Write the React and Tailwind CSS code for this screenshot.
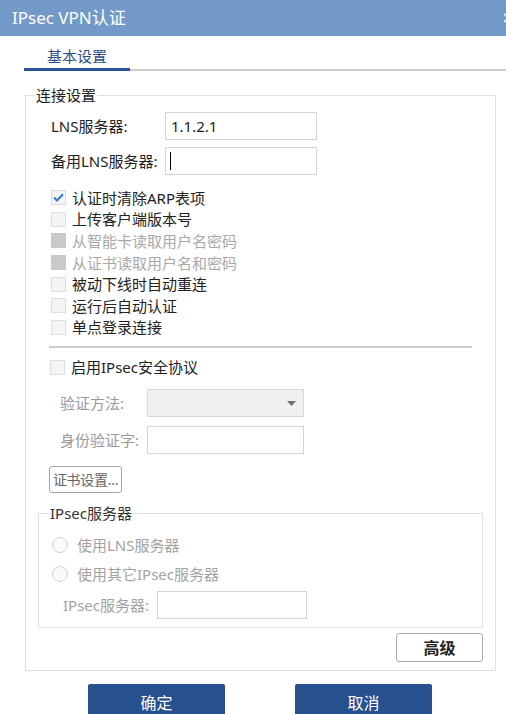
import { useState } from "react";

const CHECKS = [
  { label: "认证时清除ARP表项", checked: true },
  { label: "上传客户端版本号" },
  { label: "从智能卡读取用户名密码", disabled: true },
  { label: "从证书读取用户名和密码", disabled: true },
  { label: "被动下线时自动重连" },
  { label: "运行后自动认证" },
  { label: "单点登录连接" },
];

function Box({ checked, disabled }) {
  if (disabled) {
    return <span className="w-[15px] h-[15px] bg-[#c9c9c9] shrink-0" />;
  }
  return (
    <span className="w-[15px] h-[15px] border border-[#dedede] bg-[#f4f4f4] shrink-0 flex items-center justify-center">
      {checked && (
        <svg width="11" height="9" viewBox="0 0 11 9" fill="none">
          <path d="M1 4.5 L4 7.5 L10 1.2" stroke="#2f7fd0" strokeWidth="2" />
        </svg>
      )}
    </span>
  );
}

function CheckRow({ label, checked, disabled }) {
  return (
    <div className="h-[21.6px] flex items-center gap-[6px] pl-[25px]">
      <Box checked={checked} disabled={disabled} />
      <span className={disabled ? "text-[#a8a8a8]" : "text-[#222]"}>{label}</span>
    </div>
  );
}

function Radio({ label }) {
  return (
    <div className="h-[29px] flex items-center gap-[9px] pl-[13px]">
      <span className="w-[16px] h-[16px] rounded-full border border-[#d4d4d4] bg-[#fafafa]" />
      <span className="text-[#a3a3a3]">{label}</span>
    </div>
  );
}

export default function App() {
  const [values] = useState({ lns: "1.1.2.1" });

  return (
    <div className="w-[506px] h-[714px] bg-white overflow-hidden text-[15px] leading-[20px] font-['Noto_Sans','Noto_Sans_CJK_SC',sans-serif]">
      <div className="h-9 bg-[#7399c8] flex items-center pl-3 text-white text-[17px]">
        <span>IPsec VPN认证</span>
        <span className="ml-auto mr-[-8px] text-[20px]">×</span>
      </div>

      <div className="flex items-end">
        <div className="ml-[24px] w-[106px] text-center pt-[10px] pb-[2px] border-b-[3px] border-[#2c5597] text-[#2c4f8c]">
          基本设置
        </div>
        <div className="flex-1 border-b-2 border-[#cccccc]" />
      </div>

      <fieldset className="ml-[25px] mt-[14px] w-[471px] border border-[#e0e0e0] pb-[8px]">
        <legend className="ml-[9px] px-[1px] text-[#222]">连接设置</legend>

        <div className="pt-[7px] pl-[25px] flex flex-col gap-[7px]">
          <div className="flex items-center">
            <span className="w-[114px] text-[#222]">LNS服务器:</span>
            <div className="w-[152px] h-[28px] border border-[#d3d3e2] flex items-center px-[5px] text-[#222]">
              {values.lns}
            </div>
          </div>
          <div className="flex items-center">
            <span className="w-[114px] text-[#222]">备用LNS服务器:</span>
            <div className="w-[152px] h-[28px] border border-[#d3d3e2] flex items-center px-[4px]">
              <span className="w-px h-[18px] bg-black" />
            </div>
          </div>
        </div>

        <div className="mt-[12px]">
          {CHECKS.map((c) => (
            <CheckRow key={c.label} {...c} />
          ))}
        </div>

        <div className="ml-[23px] mt-[8px] w-[423px] h-[2px] bg-[#cccccc]" />

        <div className="mt-[8px] h-[22px] flex items-center gap-[6px] pl-[24px]">
          <Box />
          <span className="text-[#222]">启用IPsec安全协议</span>
        </div>

        <div className="mt-[11px] pl-[34px] flex flex-col gap-[9px]">
          <div className="flex items-center">
            <span className="w-[87px] text-[#999]">验证方法:</span>
            <div className="w-[157px] h-[28px] bg-[#f0f0f0] border border-[#d8d8e2] flex items-center justify-end pr-[7px]">
              <svg width="9" height="5" viewBox="0 0 9 5">
                <path d="M0 0 H9 L4.5 5 Z" fill="#6f6f6f" />
              </svg>
            </div>
          </div>
          <div className="flex items-center">
            <span className="w-[87px] text-[#999]">身份验证字:</span>
            <div className="w-[157px] h-[28px] border border-[#d3d3e2]" />
          </div>
        </div>

        <div className="mt-[12px] ml-[23px] w-[73px] h-[27px] border border-[#a4a4b8] rounded-[3px] flex items-center justify-center text-[#666] text-[14px] tracking-[-0.3px]">
          证书设置...
        </div>

        <fieldset className="ml-[12px] mt-[10px] w-[445px] border border-[#e0e0e0] pb-[8px]">
          <legend className="ml-[10px] px-[1px] text-[#333]">IPsec服务器</legend>
          <div className="pt-[7px]">
            <Radio label="使用LNS服务器" />
            <Radio label="使用其它IPsec服务器" />
          </div>
          <div className="mt-[3px] pl-[24px] flex items-center">
            <span className="w-[94px] text-[#a3a3a3]">IPsec服务器:</span>
            <div className="w-[150px] h-[28px] border border-[#d3d3e2]" />
          </div>
        </fieldset>

        <div className="mt-[5px] w-[457px] flex justify-end">
          <button className="w-[87px] h-[29px] border border-[#a8a8c0] rounded-[3px] bg-white text-[#222] text-[16px] font-semibold">
            高级
          </button>
        </div>
      </fieldset>

      <div className="mt-[13px] flex gap-[70px] pl-[88px]">
        <button className="w-[137px] h-[38px] bg-[#27508f] rounded-[2px] text-white text-[16px]">
          确定
        </button>
        <button className="w-[137px] h-[38px] bg-[#27508f] rounded-[2px] text-white text-[16px]">
          取消
        </button>
      </div>
    </div>
  );
}
